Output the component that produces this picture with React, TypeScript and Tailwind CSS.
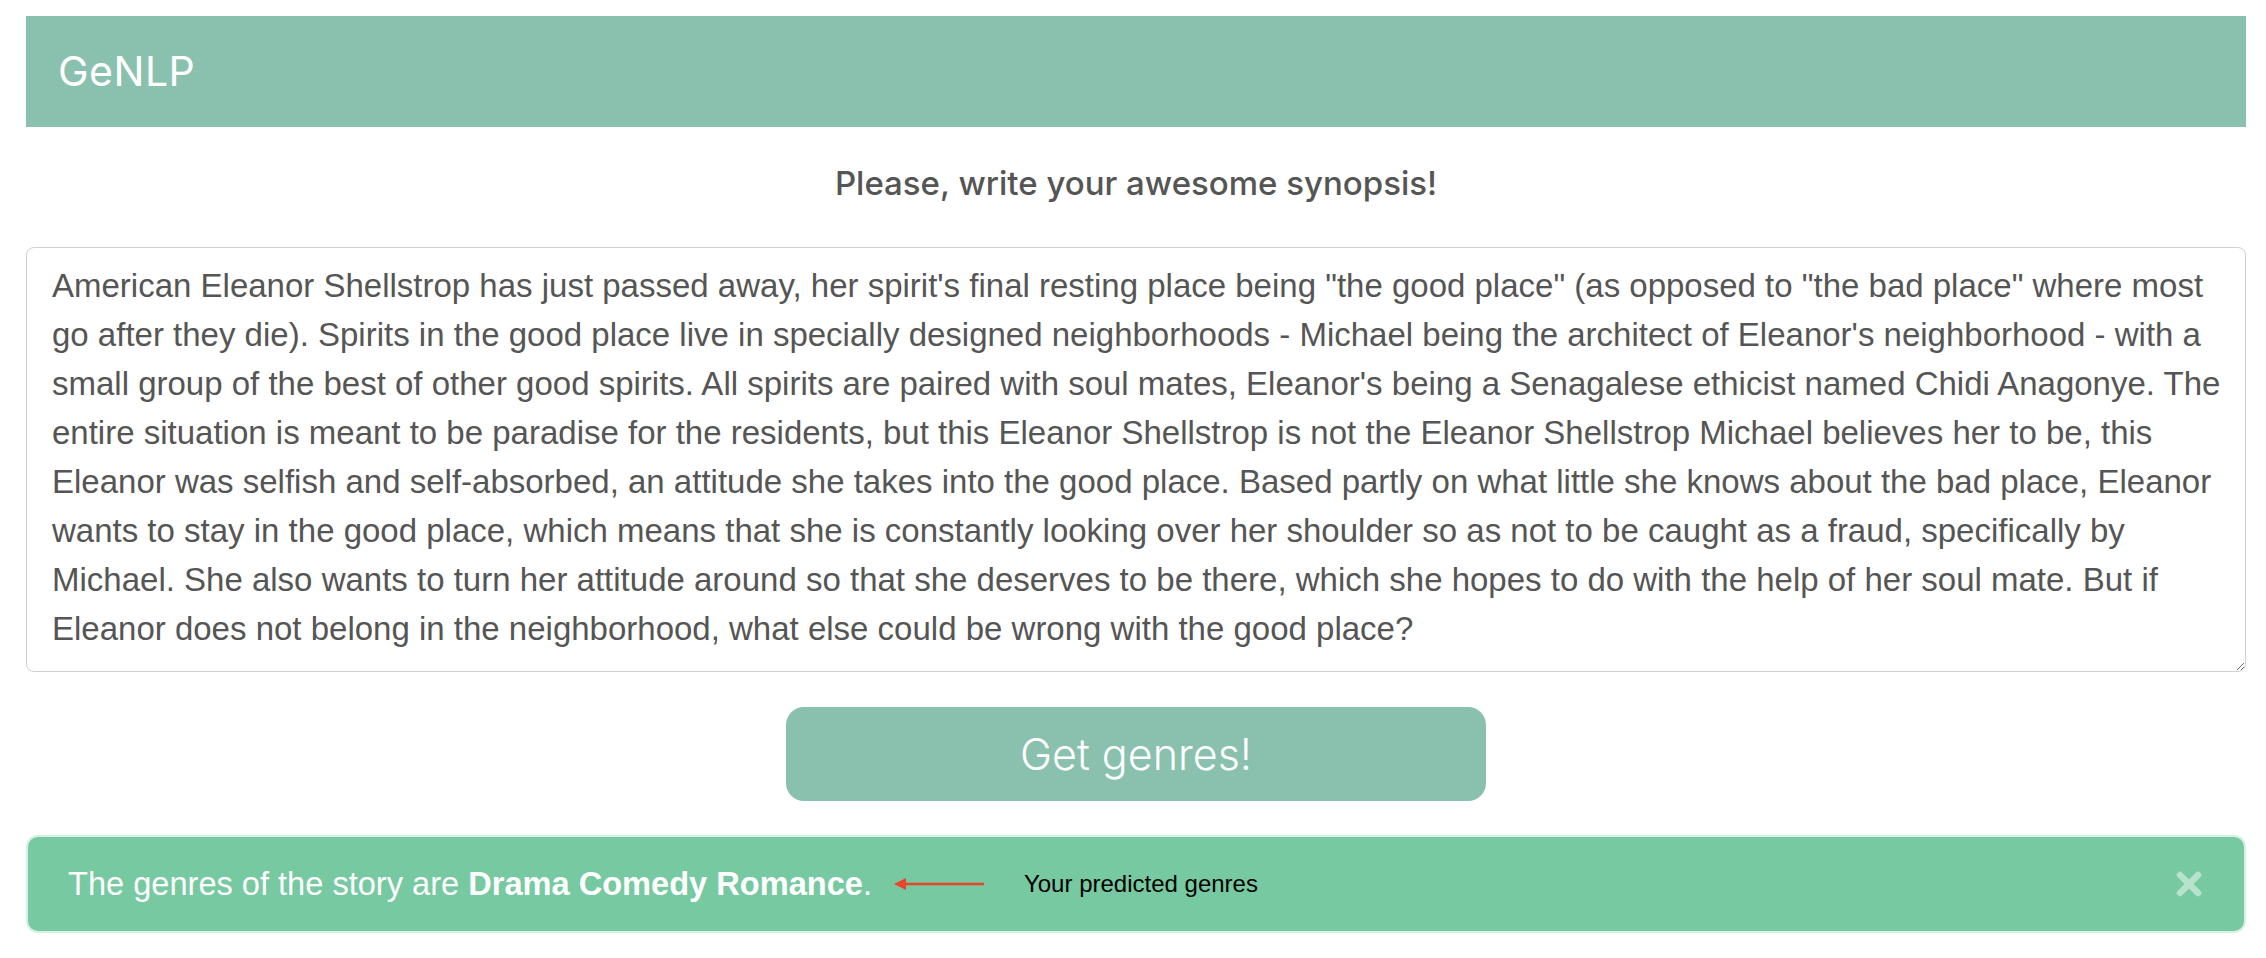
import React from "react";

const SYNOPSIS =
  "American Eleanor Shellstrop has just passed away, her spirit's final resting place being \"the good place\" (as opposed to \"the bad place\" where most go after they die). Spirits in the good place live in specially designed neighborhoods - Michael being the architect of Eleanor's neighborhood - with a small group of the best of other good spirits. All spirits are paired with soul mates, Eleanor's being a Senagalese ethicist named Chidi Anagonye. The entire situation is meant to be paradise for the residents, but this Eleanor Shellstrop is not the Eleanor Shellstrop Michael believes her to be, this Eleanor was selfish and self-absorbed, an attitude she takes into the good place. Based partly on what little she knows about the bad place, Eleanor wants to stay in the good place, which means that she is constantly looking over her shoulder so as not to be caught as a fraud, specifically by Michael. She also wants to turn her attitude around so that she deserves to be there, which she hopes to do with the help of her soul mate. But if Eleanor does not belong in the neighborhood, what else could be wrong with the good place?";

export default function App() {
  return (
    <div className="min-h-screen bg-white">
      <div className="ml-[26px] mr-[20px] pt-[16px] flex flex-col">
        <header className="h-[111px] bg-[#8ac1ae] flex items-center pl-[32px]">
          <span className="text-white text-[41px] font-[Inter,sans-serif] font-normal tracking-[0.5px] leading-none">
            GeNLP
          </span>
        </header>
        <h2 className="mt-[37px] text-center text-[#555] text-[33px] font-medium font-[Inter,sans-serif] leading-[38px]">
          Please, write your awesome synopsis!
        </h2>
        <textarea
          className="mt-[45px] h-[425px] w-full border border-[#cdd1d6] rounded-[8px] pl-[25px] pr-[24px] pt-[13px] pb-[18px] text-[33px] leading-[49px] text-[#555] font-['Liberation_Sans',Arial,sans-serif] outline-none"
          defaultValue={SYNOPSIS}
        />
        <div className="flex justify-center mt-[35px]">
          <button className="w-[700px] h-[94px] rounded-[18px] bg-[#8ac1ae] text-white text-[43px] font-light font-[Inter,sans-serif]">
            Get genres!
          </button>
        </div>
        <div className="mt-[34px] h-[98px] rounded-[12px] bg-[#77c9a1] border-2 border-[#d6f0e4] flex items-center pl-[40px] pr-[42px] font-['Liberation_Sans',Arial,sans-serif]">
          <span className="text-white text-[32.6px]">
            The genres of the story are <b>Drama Comedy Romance</b>.
          </span>
          <svg width="92" height="14" viewBox="0 0 92 14" className="ml-[22px]">
            <line x1="10" y1="7" x2="90" y2="7" stroke="#e8452a" strokeWidth="2.5" />
            <polygon points="0,7 12,1 12,13" fill="#e8452a" />
          </svg>
          <span className="ml-[38px] text-black text-[24px]">Your predicted genres</span>
          <span className="ml-auto">
            <svg width="26" height="26" viewBox="0 0 26 26">
              <path d="M4 4 L22 22 M22 4 L4 22" stroke="#b7e3cd" strokeWidth="6.5" strokeLinecap="round" />
            </svg>
          </span>
        </div>
      </div>
    </div>
  );
}
